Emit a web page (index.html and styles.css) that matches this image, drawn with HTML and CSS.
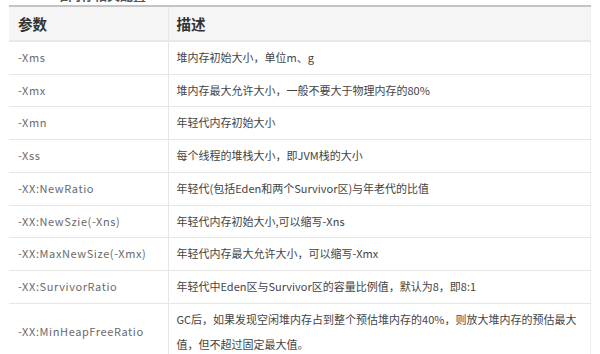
FILE: index.html
```html
<!DOCTYPE html>
<html lang="zh">
<head>
<meta charset="utf-8">
<link rel="stylesheet" href="styles.css">
</head>
<body>
<div class="page">
  <div class="caption">堆内存相关配置</div>
  <table class="params">
    <colgroup><col class="c1"><col class="c2"></colgroup>
    <thead>
      <tr><th>参数</th><th>描述</th></tr>
    </thead>
    <tbody>
      <tr><td class="name">-Xms</td><td class="desc">堆内存初始大小，单位m、g</td></tr>
      <tr><td class="name">-Xmx</td><td class="desc">堆内存最大允许大小，一般不要大于物理内存的80%</td></tr>
      <tr><td class="name">-Xmn</td><td class="desc">年轻代内存初始大小</td></tr>
      <tr><td class="name">-Xss</td><td class="desc">每个线程的堆栈大小，即JVM栈的大小</td></tr>
      <tr><td class="name">-XX:NewRatio</td><td class="desc">年轻代(包括Eden和两个Survivor区)与年老代的比值</td></tr>
      <tr><td class="name">-XX:NewSzie(-Xns)</td><td class="desc">年轻代内存初始大小,可以缩写-Xns</td></tr>
      <tr><td class="name">-XX:MaxNewSize(-Xmx)</td><td class="desc">年轻代内存最大允许大小，可以缩写-Xmx</td></tr>
      <tr><td class="name">-XX:SurvivorRatio</td><td class="desc">年轻代中Eden区与Survivor区的容量比例值，默认为8，即8:1</td></tr>
      <tr><td class="name">-XX:MinHeapFreeRatio</td><td class="desc">GC后，如果发现空闲堆内存占到整个预估堆内存的40%，则放大堆内存的预估最大值，但不超过固定最大值。</td></tr>
    </tbody>
  </table>
</div>
</body>
</html>
```

FILE: styles.css
```css
html, body {
  margin: 0;
  padding: 0;
  background: #ffffff;
}
.page {
  padding: 0 10px 0 9px;
  font-family: "Noto Sans CJK SC", "Noto Sans", sans-serif;
  overflow: hidden;
  height: 354px;
}
.caption {
  margin-top: -14px;
  height: 19px;
  padding-left: 46px;
  font-size: 13px;
  line-height: 17px;
  font-weight: bold;
  color: #555;
}
.params {
  width: 581px;
  border-collapse: collapse;
  table-layout: fixed;
  border-top: 2px solid #c4c4c4;
  border-right: 1px solid #eeeeee;
}
.c1 { width: 159px; }
.c2 { width: 422px; }
.params th {
  background: #f5f5f5;
  text-align: left;
  font-size: 14.5px;
  font-weight: bold;
  color: #333;
  height: 33px;
  padding: 0 8px;
  border-bottom: 2px solid #e8e8e8;
  border-left: 1px solid #e6e6e6;
}
.params th:first-child { border-left: 0; padding-left: 9px; }
.params td {
  padding: 3px 8px;
  line-height: 25.7px;
  font-size: 11px;
  border-bottom: 1px solid #e6e6e6;
  border-left: 1px solid #e6e6e6;
  vertical-align: middle;
}
.params td.name {
  border-left: 0;
  padding-left: 9px;
  color: #6a6a6a;
  letter-spacing: 0.6px;
}
.params td.desc {
  color: #444;
}
```
